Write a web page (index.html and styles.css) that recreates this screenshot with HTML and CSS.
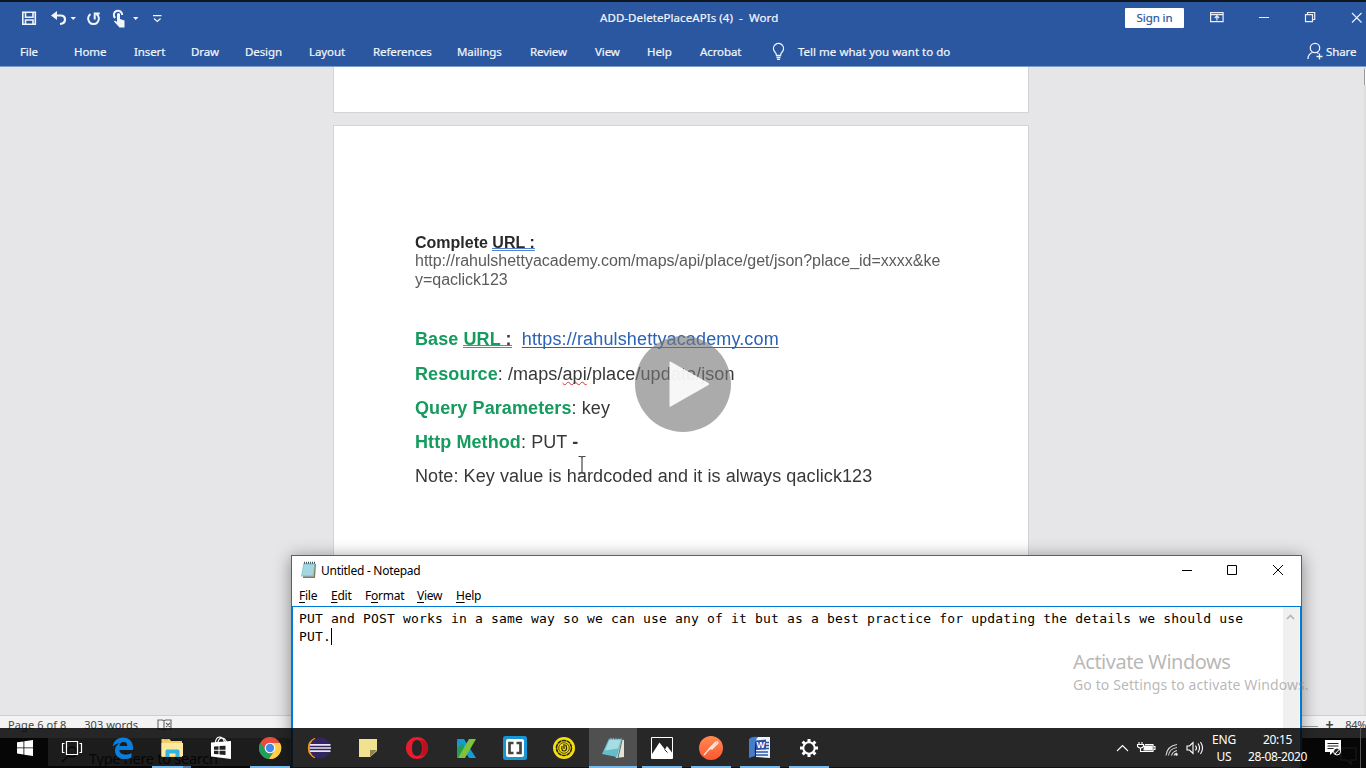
FILE: index.html
```html
<!DOCTYPE html>
<html lang="en">
<head>
<meta charset="utf-8">
<title>ADD-DeletePlaceAPIs (4) - Word</title>
<link rel="stylesheet" href="styles.css">
</head>
<body>
<div class="desktop">
  <section class="word">
    <header class="ribbon">
      <div class="titlebar">
        <svg class="quick" width="180" height="30" viewBox="0 0 180 30">
          <g fill="none" stroke="#f2f6fc" stroke-width="1.6">
            <path d="M22.8 12.300h12.500v12H22.8zM25.500 12.300v5h7.500v-5M25.500 24v-4h7.500v4"/>
            <path d="M56 15.500h4.500q4.500 0 4.500 4t-5 4.500" stroke-width="2.200"/>
            <path d="M90.500 14.200a5.400 5.400 0 1 0 6 0M94.700 19.500v-6h5" stroke-width="2"/>
            <path d="M115.200 18a4.200 4.200 0 1 1 7-3" stroke-width="2"/>
            <path d="M153 15.700h8.500M154 18.500l3.300 3 3.300-3" stroke-width="1.200"/>
          </g>
          <path d="M51 15.500l6-4.500v9zM70.500 17h5.500l-2.800 3zM133 17h5.500l-2.800 3zM117 14q1.500-2 3 0v5l4.500 1.500v7h-5l-5.500-6q.5-1.500 3 .5z" fill="#f2f6fc"/>
        </svg>
        <div class="doc-name">ADD-DeletePlaceAPIs (4)&nbsp; -&nbsp; Word</div>
        <div class="signin">Sign in</div>
        <svg class="controls" width="166" height="30" viewBox="0 0 166 30" fill="none" stroke="#e9eff8" stroke-width="1.200">
          <path d="M10.600 13.600h12.500v9H10.600zM10.600 15.600h12.500M16.900 21.500v-4.500M14.700 19l2.200-2.200 2.200 2.200M59 18.500h10M105.500 15.600h7v7h-7zM107.500 15.500v-2h7.200v7H112.500M152 14l9.500 9.500M161.500 14L152 23.500"/>
        </svg>
      </div>
      <nav class="menu">
        <span>File</span><span>Home</span><span>Insert</span><span>Draw</span><span>Design</span><span>Layout</span><span>References</span><span>Mailings</span><span>Review</span><span>View</span><span>Help</span><span>Acrobat</span>
        <svg width="16" height="20" viewBox="0 0 16 20" fill="none" stroke="#eef3fb" stroke-width="1.300"><path d="M5.500 14.500q0-2-2-4a5 5 0 1 1 8 0q-2 2-2 4zM5.500 16.500h4M6 18.300h3"/></svg>
        <span class="tell">Tell me what you want to do</span>
        <svg width="18" height="20" viewBox="0 0 18 20" fill="none" stroke="#eef3fb" stroke-width="1.300"><circle cx="8" cy="7" r="4.700"/><path d="M1 18q0-5 4.500-6.500M10 11.500l1.500 1M12.500 12.500v6M9.500 15.500h6"/></svg>
        <span>Share</span>
      </nav>
    </header>
    <main class="canvas">
      <div class="page page-prev"></div>
      <article class="page page-main">
        <p class="small"><b>Complete <span class="grammar">URL :</span></b></p>
        <p class="small url">http://rahulshettyacademy.com/maps/api/place/get/json?place_id=xxxx&amp;ke<br>y=qaclick123</p>
        <p class="base"><b class="green">Base </b><span class="grammar"><b class="green">URL</b><b> :</b></span>&nbsp; <span class="link">https://rahulshettyacademy.com</span></p>
        <p class="res"><b class="green">Resource</b>: /maps/<span class="spell">api</span>/place/update/json</p>
        <p class="query"><b class="green">Query Parameters</b>: key</p>
        <p class="method"><b class="green">Http Method</b>: PUT <b>-</b></p>
        <p class="note">Note: Key value is hardcoded and it is always qaclick123</p>
      </article>
      <div class="scroll"><i></i></div>
      <svg class="ibeam" width="10" height="20" viewBox="0 0 10 20" fill="none" stroke="#444" stroke-width="1.200"><path d="M1.500 1.500H4l1 1 1-1h2.500M5 2v15M1.500 18H4l1-1 1 1h2.500"/></svg>
    </main>
    <footer class="status"><span class="pages">Page 6 of 8</span><span class="words">303 words</span>
      <svg width="18" height="14" viewBox="0 0 18 14" fill="none" stroke="#666" stroke-width="1.100"><path d="M2 2h4.500l1.500 1 1.500-1H15v9H9.500L8 12l-1.500-1H2zM8 3v9M10 5l4 4M14 5l-4 4"/></svg>
      <span class="zoom"><i></i><b>+</b>84%</span>
    </footer>
    <div class="inner-taskbar"><div class="start"></div><div class="search"><svg width="18" height="20" viewBox="0 0 18 20" fill="none" stroke="#000" stroke-width="1.600"><circle cx="11" cy="6" r="5"/><path d="M7 10l-6 6"/></svg>Type here to search</div>
      <svg class="bubble" width="20" height="22" viewBox="0 0 20 22" fill="none" stroke="#777" stroke-width="1.500"><path d="M1 2h15v12h-5v4l-4-4H1z"/></svg></div>
  </section>

  <section class="notepad">
    <div class="np-title">
      <svg width="17" height="18" viewBox="0 0 17 18"><path d="M4 3h12l-1 14H3z" fill="#8a7b55"/><path d="M3.500 2h11.500l-1.300 13.500H1z" fill="#8ecbd8"/><path d="M4 5h10M3.600 7h10M3.200 9h10M3 11h10M2.500 13h10" stroke="#c8eaf0" stroke-width=".8"/><path d="M4 1.700h11" stroke="#41545a" stroke-width="2" stroke-dasharray="1 1"/></svg>
      <span>Untitled - Notepad</span>
      <svg class="np-controls" width="110" height="16" viewBox="0 0 110 16" fill="none" stroke="#000"><path d="M4 8.500h10M49.500 3.500h9v9h-9zM95 3l10 10M105 3L95 13"/></svg>
    </div>
    <div class="np-menu"><span><u>F</u>ile</span><span><u>E</u>dit</span><span>F<u>o</u>rmat</span><span><u>V</u>iew</span><span><u>H</u>elp</span></div>
    <div class="np-edit"><div class="np-text">PUT and POST works in a same way so we can use any of it but as a best practice for updating the details we should use<br>PUT.<i class="caret"></i></div>
      <div class="np-scroll"><svg width="9" height="8" viewBox="0 0 9 8" fill="none" stroke="#b5b5b5" stroke-width="1.700"><path d="M1 6l3.500-3.500L8 6"/></svg></div></div>
  </section>

  <div class="activate"><div>Activate Windows</div><p>Go to Settings to activate Windows.</p></div>

  <div class="play"><svg width="96" height="96" viewBox="0 0 96 96"><circle cx="48" cy="48" r="48" fill="#777" fill-opacity=".62"/><path d="M34.500 26.500q0-1.500 1.300-.8L73.500 47q1.200 1 0 2L35.800 70.500Q34.500 71 34.500 70z" fill="#fff" fill-opacity=".9"/></svg></div>

  <footer class="taskbar">
    <div class="apps">
      <div class="app"><svg viewBox="0 0 24 24" fill="#fff"><path d="M4 6.300l6.500-.9v6.100H4zM11.300 5.300L20 4v7.500h-8.700zM4 12.300h6.500v6.200L4 17.600zM11.300 12.300H20V20l-8.700-1.300z"/></svg></div>
      <div class="app task-view"><svg viewBox="0 0 24 24" fill="none" stroke="#fff" stroke-width="1.200"><path d="M6.500 5.500h11v13h-11zM4.500 7.500h-2v9h2M19.500 7.500h2v9h-2"/></svg></div>
      <div class="app"><svg viewBox="0 0 24 24"><path d="M1.700 10.500C2.500 5 6.500 1.500 12 1.500c6.500 0 10 4.500 10 10V14H8.300c.2 3 2.700 4.500 6 4.500 2.400 0 4.700-.7 6.200-1.600v4.600c-2 1-4.500 1.500-7 1.500-5.800 0-9.500-3.500-9.500-8.600 0-3.400 1.800-6 4.800-7.500-2.900.3-5.300 1.600-7.100 3.600zM8.500 10h7.800c0-2.400-1.200-3.900-3.600-3.900-2.300 0-3.900 1.500-4.200 3.900z" fill="#0b7ddb"/></svg></div>
      <div class="app run-explorer"><svg viewBox="0 0 24 24"><path d="M1.500 3h8l1.500 2H22v16H1.500z" fill="#f3cf67"/><path d="M1.500 7H23v13H1.500z" fill="#ffe9a0"/><path d="M4 3.800h4" stroke="#e4a52c"/><path d="M5.500 21v-6q0-1.500 1.500-1.500h11q1.500 0 1.500 1.500v6h-4v-3.500h-6V21z" fill="#32b5dc"/></svg></div>
      <div class="app"><svg viewBox="0 0 24 24"><path d="M2 6.500l20-1.500v18L2 20.500z" fill="#fff"/><path d="M6.500 7q0-5.500 4-6 3.500 0 5 5M9 6q1-4 4-4t4.500 4" fill="none" stroke="#fff" stroke-width="1.200"/><path d="M5 10.500l4.500-.3v3.500H5zM10.500 10.100l6-.4v4h-6zM5 14.700h4.500v3.600L5 18zM10.500 14.700h6v4.200l-6-.5z" fill="#222"/></svg></div>
      <div class="app run"><svg viewBox="0 0 24 24"><circle cx="12" cy="12" r="11" fill="#ea4b3c"/><path d="M2.500 6.500A11 11 0 0 0 11 23l5-8.500-8 0z" fill="#20a05a"/><path d="M11 23A11 11 0 0 0 22 7H12l4.500 7.500z" fill="#ffd044"/><circle cx="12" cy="12" r="5.300" fill="#fff"/><circle cx="12" cy="12" r="4.200" fill="#4387ef"/></svg></div>
      <div class="app"><svg viewBox="0 0 24 24"><path d="M8 1.700a11 11 0 0 0 0 20.600" fill="#f89820"/><circle cx="13" cy="12" r="10.500" fill="#332560"/><path d="M3 8.800h20.500M2.500 12h21.500M3 15.200h20.500" stroke="#e9e5f2" stroke-width="1.700"/></svg></div>
      <div class="app"><svg viewBox="0 0 24 24"><path d="M3 3h18v12l-7 6H3z" fill="#f0e28f"/><path d="M14 14h7l-7 7z" fill="#8c8452"/></svg></div>
      <div class="app"><svg viewBox="0 0 24 24"><path fill-rule="evenodd" d="M12 1a11 11 0 1 1 0 22 11 11 0 0 1 0-22zm0 3C8 4 7 8 7 12s1 8 5 8 5-4 5-8-1-8-5-8z" fill="#ed1b2e"/><path d="M15 3.500q2.500 2.500 2.500 8.500T15 20.500Q23 19 23 12t-8-8.500z" fill="#bb1020"/></svg></div>
      <div class="app"><svg viewBox="0 0 24 24"><path d="M3 3h7l12 19h-7z" fill="#159bd7"/><path d="M3 3l5 7-5 9z" fill="#159bd7"/><path d="M3 11l6-3 2 5-7 9H3z" fill="#249e56"/><path d="M15 3h7L11 22H4z" fill="#7fc23e"/></svg></div>
      <div class="app"><svg viewBox="0 0 24 24"><rect width="24" height="24" rx="2.500" fill="#1895d5"/><rect x="3" y="3" width="18" height="18" rx="2" fill="#fff"/><path d="M10.500 7H6.500v10h4M13.500 7h4v10h-4" fill="none" stroke="#444" stroke-width="2.700"/></svg></div>
      <div class="app"><svg viewBox="0 0 24 24" fill="none" stroke="#25230b"><circle cx="12" cy="12" r="11" fill="#f4dd12" stroke="none"/><circle cx="12" cy="12" r="7.500" stroke-width="1.500" stroke-dasharray="4.200 .5"/><circle cx="12" cy="12" r="5.300" stroke-width=".8"/><path d="M10 10q-1 5 2 5t2.500-4M12 8v5M13 9q2 0 1 2" stroke-width="1.200"/></svg></div>
      <div class="app active"><svg viewBox="0 0 24 24"><path d="M9 2l14 2v17l-8 1z" fill="#e2e4d7"/><path d="M8 2.500h13l-5 18.500L1 18z" fill="#65bdcc"/><path d="M8.500 3.500h11.500l-3 9-13 2z" fill="#a8dce3"/><path d="M8 2.500h14" stroke="#526469" stroke-width="1.500" stroke-dasharray="1.500 1"/><path d="M21 4l-4 18" stroke="#666d60"/></svg></div>
      <div class="app run"><svg viewBox="0 0 24 24"><path d="M1.500 1.500h21v21h-21z" fill="#222" stroke="#fff"/><path d="M2 18l7.500-11.500L15 13.500l2-3.500 5 6.500V22H2z" fill="#fff"/><path d="M14.500 13.500l3 3" stroke="#222"/></svg></div>
      <div class="app run"><svg viewBox="0 0 24 24"><defs><linearGradient id="flame" x2="0" y2="1"><stop stop-color="#ff8b50"/><stop offset="1" stop-color="#ff5630"/></linearGradient></defs><circle cx="12" cy="12" r="12" fill="url(#flame)"/><path d="M5 19l8-9M12 12l5-6q2-1 2 1l-6 6z" fill="none" stroke="#ffe7dc" stroke-width="1.300"/><path d="M10 13.500l7-7" stroke="#ffe7dc" stroke-width="2"/></svg></div>
      <div class="app run"><svg viewBox="0 0 24 24"><path d="M8 1h14v21l-14-1z" fill="#edf1fb"/><path d="M1 3q3-3 9-2Q6 4 7 20l-6 2z" fill="#447dcb"/><path d="M8 4.500l10-1v10L8 14z" fill="#2552a5"/><text x="8.500" y="12.200" class="word-mark">W</text><path d="M8 16h12M8 19h12M18 6.500h3M18 9.500h3M18 12.500h3" stroke="#2855a8" stroke-width="1.500"/></svg></div>
      <div class="app run"><svg viewBox="0 0 24 24" fill="none" stroke="#fff"><circle cx="12" cy="12" r="5.700" stroke-width="2"/><path d="M12 3v3M12 18v3M3 12h3M18 12h3M5.600 5.600l2.200 2.200M16.200 16.200l2.200 2.200M18.400 5.600l-2.200 2.200M7.800 16.200l-2.200 2.200" stroke-width="3"/></svg></div>
    </div>
    <svg class="tray" width="92" height="24" viewBox="0 0 92 24" fill="none" stroke="#fff" stroke-width="1.100"><path d="M3 15l5.500-5.500L14 15M25 6v3M28 6v3M23.500 8.500h6v2q-3 3-6 0zM26.500 12v3.500h3M31 8.500h8v7H28.500"/><path d="M30.500 10h7.500v4H30z" fill="#fff"/><path d="M39.500 10.500H41v3h-1.500"/><path d="M52 19.500Q53 10 63 8.500M54.500 19.500Q55.500 12.500 63 11.500M57.500 19.500q1-4 5.500-5M60 19.500q.5-2 3-2.500" stroke="#d4d4d4"/><circle cx="62.500" cy="18.500" r="1.200" fill="#fff" stroke="none"/><path d="M73 10h2.500l3.500-3.500v11L75.500 14H73zM81.500 9.500q2 2.500 0 5M84 7.500q3 4.500 0 9M86.500 6q4 6 0 12"/></svg>
    <div class="lang">ENG<br>US</div>
    <div class="clock">20:15<br>28-08-2020</div>
    <svg class="notice" width="18" height="18" viewBox="0 0 18 18"><path d="M1 1h16v12H9l-3 3v-3H1z" fill="#fff"/><path d="M3.500 4.500h11M3.500 7h11M3.500 9.500h6" stroke="#222" stroke-width="1.200"/><circle cx="13" cy="12.500" r="3.500" fill="#222" stroke="#fff"/><path d="M11 15l4.500-5" stroke="#fff"/></svg>
    <i class="peek"></i>
  </footer>
</div>
</body>
</html>
```
FILE: styles.css
```css
* { box-sizing: border-box; }
body { margin: 0; overflow: hidden; }
p { margin: 0; }
svg { display: block; flex: none; }
.desktop { position: relative; width: 1366px; height: 768px; overflow: hidden; background: #0d131c; font-family: "Noto Sans", "Open Sans", sans-serif; }

/* Word window */
.word { position: absolute; inset: 0; display: flex; flex-direction: column; border-top: 2px solid #10161f; }
.ribbon { flex: none; height: 65px; background: #2a579f; border-bottom: 1px solid #7d9aca; color: #f3f6fb; font-size: 11.5px; letter-spacing: -.1px; -webkit-text-stroke: .2px; }
.titlebar { display: flex; height: 31px; }
.quick { margin-top: -1px; }
.titlebar .quick, .titlebar .controls { transform: translateY(-1px); }
.doc-name { width: 945px; padding-left: 420px; line-height: 32px; letter-spacing: .07px; white-space: nowrap; }
.signin { width: 59px; height: 20px; margin-top: 6px; border-radius: 1px; background: #fff; color: #2a579f; line-height: 20px; text-align: center; }
.controls { margin: -2px 0 0 16px; }
.menu { display: grid; grid-template-columns: 54px 60px 57px 54px 64px 64px 84px 73px 65px 52px 53px 71px 27px 509px 19px 40px; height: 34px; padding-left: 20px; line-height: 37px; white-space: nowrap; }
.menu svg { margin-top: 8px; }
.tell { letter-spacing: .02px; }
.canvas { position: relative; flex: none; height: 648px; background: #e6e6e8; overflow: hidden; }
.page { width: 696px; margin-left: 333px; background: #fff; border: 1px solid #d4d4d6; }
.page-prev { height: 46px; border-top: 0; }
.page-main { height: 560px; margin-top: 12px; padding: 108px 0 0 81px; color: #383838; font-family: "Liberation Sans", Arial, sans-serif; font-size: 18px; line-height: 22px; letter-spacing: .09px; white-space: nowrap; }
.page-main p { filter: blur(.3px); }
.small { font-size: 16px; line-height: 18px; letter-spacing: 0; }
.small b { color: #292929; }
.url { color: #5b5b5b; line-height: 18.500px; letter-spacing: -.02px; }
.green { color: #149b5d; }
.grammar { display: inline-block; height: 17px; line-height: 17px; border-bottom: 3px double #5684cc; }
.base { margin-top: 38.500px; }
.base .link { letter-spacing: .14px; }
.res { margin-top: 13px; }
.query, .method, .note { margin-top: 12.300px; }
.link { color: #2b62b5; text-decoration: underline; text-decoration-thickness: 1px; text-underline-offset: 2px; text-decoration-skip-ink: none; }
.spell { text-decoration: underline wavy #d33434 1px; text-underline-offset: 1px; text-decoration-skip-ink: none; }
.scroll { position: absolute; right: 0; top: 0; width: 2px; height: 648px; background: #dededf; }
.scroll i { display: block; height: 16px; margin-top: 2px; background: #fff; border-left: 1px solid #999; }
.ibeam { position: absolute; left: 577px; top: 388px; }
.status { flex: none; display: flex; height: 23px; padding-left: 8px; border-top: 1px solid #cfcfcf; background: #f3f3f4; color: #444; font-size: 11px; line-height: 18px; white-space: nowrap; }
.status svg { margin-top: 2px; }
.pages { width: 77px; letter-spacing: .1px; }
.words { width: 73px; letter-spacing: .05px; }
.zoom { display: flex; gap: 12px; margin-left: 1114px; letter-spacing: -.3px; }
.zoom i { width: 30px; height: 1px; margin-top: 10px; background: #999; }
.zoom b { font-size: 14px; margin-left: -5px; }
.inner-taskbar { display: flex; height: 30px; background: #000; }
.start { width: 48px; }
.search { display: flex; width: 244px; height: 28px; padding: 8px 0 0 13px; gap: 10px; background: #a6a6a6; color: #000; font-size: 14.500px; line-height: 24px; letter-spacing: -.25px; white-space: nowrap; }
.bubble { margin: 8px 0 0 1048px; }

/* Notepad window */
.notepad { position: absolute; left: 291px; top: 555px; width: 1011px; height: 213px; border: 1px solid #0078d7; background: #fff; box-shadow: 0 2px 16px rgba(0,0,0,.42); color: #000; font-size: 12px; }
.np-title { display: flex; height: 30px; padding-left: 8px; line-height: 29px; }
.np-title > svg { margin-top: 5px; }
.np-title span { width: 102px; margin-left: 4px; letter-spacing: -.27px; white-space: nowrap; }
.np-title .np-controls { margin: 6px 0 0 755px; }
.np-menu { display: grid; grid-template-columns: 32px 34px 52px 39px 40px; height: 20px; padding-left: 7px; line-height: 20px; letter-spacing: -.25px; }
.np-menu u { text-underline-offset: 2px; text-decoration-thickness: 1px; }
.np-edit { display: flex; height: 163px; border: solid #0078d7; border-width: 1px 1px 0 1px; }
.np-text { width: 990px; padding: 3px 0 0 6px; font: 13px/18px "DejaVu Sans Mono", monospace; letter-spacing: .175px; white-space: nowrap; }
.caret { display: inline-block; width: 1px; height: 17px; background: #000; vertical-align: -4px; }
.np-scroll { width: 16px; padding: 6px 0 0 3px; background: #f0f0f0; }
.activate { position: absolute; left: 1073px; top: 649px; color: rgba(130,130,130,.58); white-space: nowrap; }
.activate div { font-size: 20px; line-height: 26px; letter-spacing: -.5px; }
.activate p { font-size: 14px; line-height: 20px; letter-spacing: .11px; }
.play { position: absolute; left: 635px; top: 336px; }

/* Taskbar */
.taskbar { position: absolute; left: 0; right: 0; bottom: 0; display: flex; height: 40px; background: rgba(7,7,7,.87); color: #fff; font-size: 12px; }
.apps { display: grid; grid-template-columns: repeat(17, 49px); width: 1114px; }
.app { display: flex; align-items: center; justify-content: center; height: 40px; }
.app svg { width: 24px; height: 24px; }
.task-view { padding-right: 3px; }
.run { background: linear-gradient(#76b9ed, #76b9ed) 5px 38px / 40px 2px no-repeat; }
.run-explorer { background: linear-gradient(90deg, #76b9ed 31px, #537fa2 31px) 5px 38px / 39px 2px no-repeat; }
.active { width: 48px; margin-left: 1px; background: #505050; border-bottom: 2px solid #76b9ed; }
.active svg { margin-top: 2px; }
.word-mark { fill: #fff; font: bold 9px "Liberation Sans", sans-serif; }
.tray { margin-top: 8px; }
.lang, .clock { text-align: center; line-height: 17px; padding-top: 3px; letter-spacing: -.2px; }
.lang { width: 36px; }
.clock { width: 71px; letter-spacing: -.35px; }
.notice { margin: 11px 0 0 11px; }
.peek { width: 1px; height: 40px; margin-left: 18px; background: #555; }
```
